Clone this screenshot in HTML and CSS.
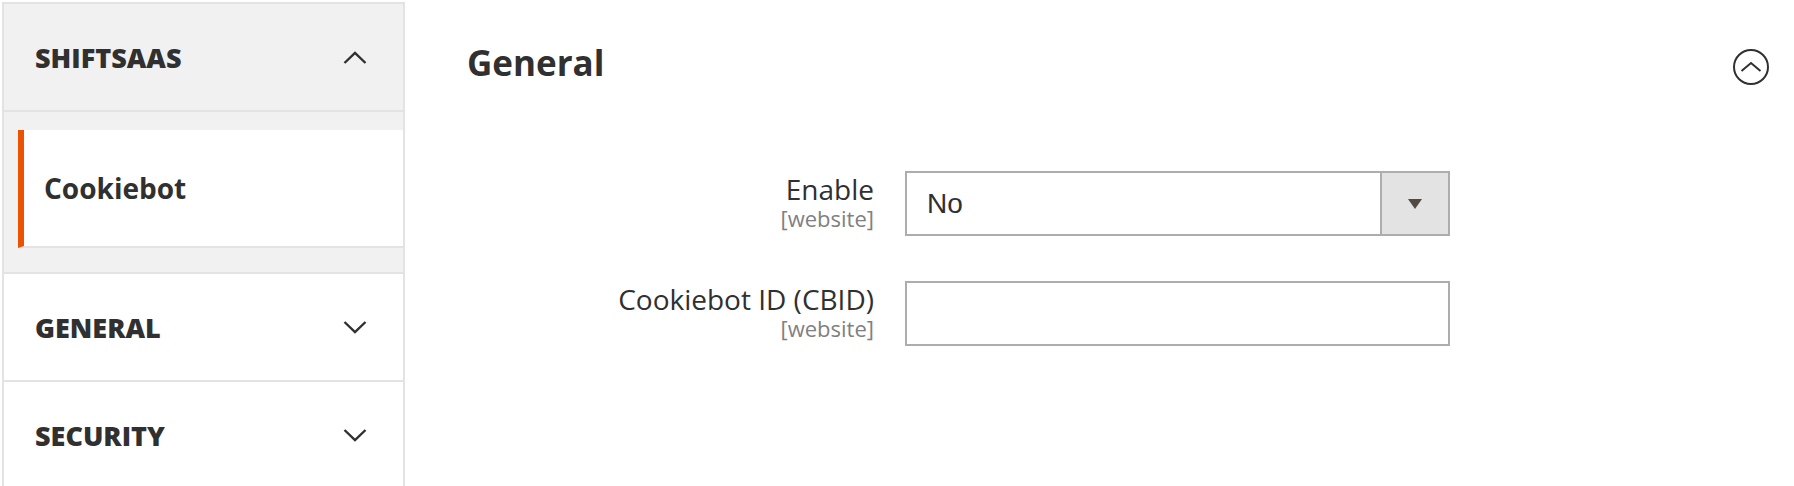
FILE: index.html
```html
<!DOCTYPE html>
<html lang="en">
<head>
<meta charset="utf-8">
<title>Configuration - Cookiebot</title>
<link rel="stylesheet" href="styles.css">
</head>
<body>
<aside class="nav">
  <div class="nav-block nav-block-open">
    <div class="nav-title">
      <strong>SHIFTSAAS</strong>
      <svg class="chev" width="24" height="13" viewBox="0 0 24 13"><polyline points="1.5,12 12,1.8 22.5,12" /></svg>
    </div>
    <ul class="nav-items">
      <li class="nav-item nav-item-active"><a href="#">Cookiebot</a></li>
    </ul>
  </div>
  <div class="nav-block">
    <div class="nav-title">
      <strong>GENERAL</strong>
      <svg class="chev" width="24" height="13" viewBox="0 0 24 13"><polyline points="1.5,1 12,11.2 22.5,1" /></svg>
    </div>
  </div>
  <div class="nav-block">
    <div class="nav-title">
      <strong>SECURITY</strong>
      <svg class="chev" width="24" height="13" viewBox="0 0 24 13"><polyline points="1.5,1 12,11.2 22.5,1" /></svg>
    </div>
  </div>
</aside>
<main class="main">
  <div class="section-head">
    <h2 class="section-title">General</h2>
    <svg class="collapse" width="38" height="38" viewBox="0 0 38 38"><circle cx="19" cy="19" r="17" /><polyline points="9.5,23 19,15 28.5,23" /></svg>
  </div>
  <div class="form">
    <div class="row">
      <div class="label-col">
        <label class="label">Enable</label>
        <div class="scope">[website]</div>
      </div>
      <div class="select">
        <span class="select-value">No</span>
        <span class="select-btn"><span class="tri"></span></span>
      </div>
    </div>
    <div class="row">
      <div class="label-col">
        <label class="label">Cookiebot ID (CBID)</label>
        <div class="scope">[website]</div>
      </div>
      <input class="input" type="text" value="">
    </div>
  </div>
</main>
</body>
</html>
```
FILE: styles.css
```css
html, body {
  margin: 0;
  padding: 0;
}
body {
  width: 1794px;
  height: 486px;
  overflow: hidden;
  display: flex;
  background: #ffffff;
  font-family: "Open Sans", "Liberation Sans", sans-serif;
  color: #303030;
}
.nav {
  box-sizing: border-box;
  width: 403px;
  flex-shrink: 0;
  margin: 2px 0 0 2px;
  border: 2px solid #e3e3e3;
  border-bottom: 0;
  background: #ffffff;
}
.nav-block {
  border-bottom: 2px solid #e3e3e3;
}
.nav-title {
  height: 106px;
  display: flex;
  align-items: center;
  justify-content: space-between;
  padding: 0 36px 0 31px;
  font-size: 27px;
  font-weight: 700;
}
.nav-block-open .nav-title {
  background: #f1f1f1;
  border-bottom: 2px solid #e3e3e3;
}
.chev polyline {
  fill: none;
  stroke: #303030;
  stroke-width: 2.4;
}
.nav-items {
  list-style: none;
  margin: 0;
  padding: 18px 0 24px 14px;
  background: #f1f1f1;
}
.nav-item {
  background: #ffffff;
  height: 116px;
  display: flex;
  align-items: center;
  border-bottom: 2px solid #e3e3e3;
}
.nav-item-active {
  border-left: 6px solid #eb5202;
}
.nav-item a {
  padding-left: 20px;
  font-size: 28px;
  font-weight: 700;
  color: #303030;
  text-decoration: none;
}
.main {
  flex: 1;
  padding: 42px 24px 0 62px;
}
.section-head {
  display: flex;
  align-items: flex-start;
  justify-content: space-between;
}
.section-title {
  margin: 0;
  font-size: 35px;
  font-weight: 700;
  line-height: 42px;
  color: #303030;
}
.collapse {
  margin-top: 6px;
}
.collapse circle,
.collapse polyline {
  fill: none;
  stroke: #303030;
  stroke-width: 2;
}
.form {
  margin-top: 85px;
}
.row {
  display: grid;
  grid-template-columns: 407px 545px;
  column-gap: 31px;
  margin-bottom: 45px;
}
.label-col {
  text-align: right;
  padding-top: 1px;
}
.label {
  display: block;
  font-size: 28px;
  line-height: 34px;
  color: #303030;
}
.scope {
  font-size: 22px;
  line-height: 24px;
  color: #808080;
}
.select {
  box-sizing: border-box;
  height: 65px;
  border: 2px solid #adadad;
  display: flex;
  align-items: stretch;
  background: #ffffff;
}
.select-value {
  flex: 1;
  display: flex;
  align-items: center;
  padding-left: 20px;
  font-family: "Liberation Sans", Arial, sans-serif;
  font-size: 28px;
  color: #303030;
}
.select-btn {
  width: 66px;
  border-left: 2px solid #adadad;
  background: #e3e3e3;
  display: flex;
  align-items: center;
  justify-content: center;
}
.tri {
  width: 0;
  height: 0;
  border-left: 7px solid transparent;
  border-right: 7px solid transparent;
  border-top: 10px solid #514943;
}
.input {
  box-sizing: border-box;
  height: 65px;
  width: 545px;
  margin: 0;
  border: 2px solid #adadad;
  border-radius: 0;
  background: #ffffff;
  font-family: "Liberation Sans", Arial, sans-serif;
  font-size: 28px;
  padding: 0 20px;
  outline: none;
}
```
